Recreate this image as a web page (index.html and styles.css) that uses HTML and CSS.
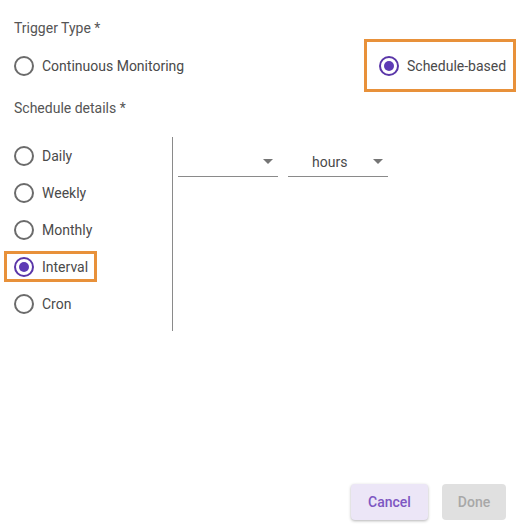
FILE: index.html
```html
<!DOCTYPE html>
<html>
<head>
<meta charset="utf-8">
<link rel="stylesheet" href="styles.css">
</head>
<body>
<div class="dialog">
  <p class="section-label">Trigger Type *</p>
  <div class="trigger-row">
    <label class="radio"><span class="circle"></span><span class="text">Continuous Monitoring</span></label>
    <label class="radio checked highlight-box"><span class="circle"></span><span class="text">Schedule-based</span></label>
  </div>
  <p class="section-label details-label">Schedule details *</p>
  <div class="schedule">
    <div class="options">
      <div class="opt-row"><label class="radio"><span class="circle"></span><span class="text">Daily</span></label></div>
      <div class="opt-row"><label class="radio"><span class="circle"></span><span class="text">Weekly</span></label></div>
      <div class="opt-row"><label class="radio"><span class="circle"></span><span class="text">Monthly</span></label></div>
      <div class="opt-row"><label class="radio checked highlight-small"><span class="circle"></span><span class="text">Interval</span></label></div>
      <div class="opt-row"><label class="radio"><span class="circle"></span><span class="text">Cron</span></label></div>
    </div>
    <div class="fields">
      <div class="select"><span class="value"></span><span class="arrow"></span></div>
      <div class="select"><span class="value">hours</span><span class="arrow"></span></div>
    </div>
  </div>
  <div class="footer">
    <button class="btn cancel">Cancel</button>
    <button class="btn done">Done</button>
  </div>
</div>
</body>
</html>
```
FILE: styles.css
```css
html, body {
  margin: 0;
  padding: 0;
  background: #fff;
}
body {
  width: 526px;
  height: 526px;
  font-family: Roboto, "Liberation Sans", sans-serif;
  font-size: 14px;
  color: #555;
}
.dialog {
  box-sizing: border-box;
  height: 526px;
  padding: 20px 10px 6px 14px;
  display: flex;
  flex-direction: column;
}
.section-label {
  margin: 0;
  line-height: 16px;
  color: #555;
}
.trigger-row {
  margin-top: 3px;
  height: 53px;
  display: flex;
  align-items: center;
  justify-content: space-between;
}
.radio {
  display: inline-flex;
  align-items: center;
  color: #4a4a4a;
  line-height: 16px;
}
.circle {
  box-sizing: border-box;
  width: 20px;
  height: 20px;
  border: 2px solid #6b6b6b;
  border-radius: 50%;
  display: inline-flex;
  align-items: center;
  justify-content: center;
  flex: none;
}
.text {
  margin-left: 8px;
}
.radio.checked .circle {
  border-color: #5a36a8;
}
.radio.checked .circle::after {
  content: "";
  width: 10px;
  height: 10px;
  border-radius: 50%;
  background: #5e3bb5;
}
.highlight-box {
  box-sizing: border-box;
  width: 152px;
  height: 53px;
  border: 3px solid #e8913a;
  padding-left: 12px;
}
.details-label {
  margin-top: 8px;
}
.schedule {
  margin-top: 21px;
  display: flex;
  align-items: flex-start;
}
.options {
  box-sizing: border-box;
  width: 159px;
  height: 194px;
  border-right: 1px solid #8a8a8a;
}
.opt-row {
  height: 37px;
  display: flex;
  align-items: center;
}
.highlight-small {
  box-sizing: border-box;
  height: 31px;
  margin-left: -10px;
  padding: 0 6px 0 7px;
  border: 3px solid #e8913a;
}
.fields {
  display: flex;
  gap: 10px;
  margin-left: 5px;
  margin-top: 9px;
}
.select {
  box-sizing: border-box;
  width: 100px;
  height: 31px;
  border-bottom: 1px solid #8a8a8a;
  display: flex;
  align-items: center;
  position: relative;
}
.value {
  padding-left: 24px;
  padding-top: 1px;
  color: #4a4a4a;
}
.arrow {
  position: absolute;
  right: 5px;
  top: 13px;
  width: 0;
  height: 0;
  border-left: 5px solid transparent;
  border-right: 5px solid transparent;
  border-top: 5px solid #757575;
}
.footer {
  margin-top: auto;
  display: flex;
  justify-content: flex-end;
  gap: 14px;
  padding-right: 10px;
}
.btn {
  height: 36px;
  border: none;
  border-radius: 4px;
  font-family: Roboto, "Liberation Sans", sans-serif;
  font-size: 14px;
  font-weight: 500;
  padding: 0;
}
.cancel {
  width: 77px;
  background: #ece6f7;
  color: #7e57c2;
  box-shadow: 0 1px 3px rgba(0,0,0,0.3);
}
.done {
  width: 64px;
  background: #e0e0e0;
  color: #a8a8a8;
}
```
